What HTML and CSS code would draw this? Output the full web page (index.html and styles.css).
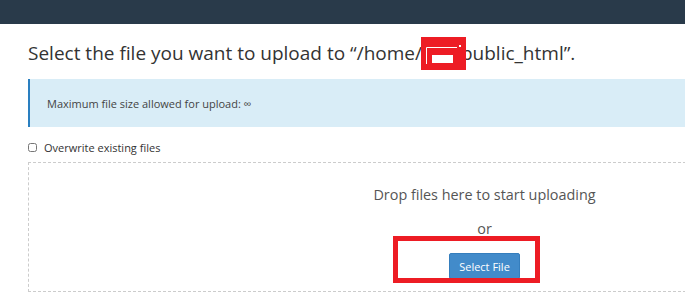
FILE: index.html
```html
<!DOCTYPE html>
<html lang="en">
<head>
    <meta charset="UTF-8">
    <meta name="viewport" content="width=device-width, initial-scale=1.0">
    <title>File Upload</title>
    <link rel="stylesheet" href="styles.css">
</head>
<body>
    <div class="topbar"></div>

    <div class="content">
        <h1 class="page-title">Select the file you want to upload to “/home/<span class="redact"><svg width="45" height="33" viewBox="0 0 45 33"><path d="M5.5 27 V10.5 H36" fill="none" stroke="#fff" stroke-width="1"/><rect x="38" y="8" width="2" height="2" fill="#fff"/><rect x="11" y="18" width="21" height="8" fill="#fff"/></svg></span>public_html”.</h1>

        <div class="callout">
            Maximum file size allowed for upload: ∞
        </div>

        <label class="overwrite">
            <input type="checkbox">
            Overwrite existing files
        </label>

        <div class="dropzone">
            <p class="drop-text">Drop files here to start uploading</p>
            <p class="drop-or">or</p>
            <div class="btn-wrap">
                <button class="btn-select">Select File</button>
                <div class="highlight"></div>
            </div>
        </div>
    </div>
</body>
</html>
```

FILE: styles.css
```css
html, body {
    overflow: hidden;
}
body {
    margin: 0;
    font-family: "Open Sans", "Liberation Sans", sans-serif;
    color: #333;
    background: #fff;
}
.topbar {
    height: 24px;
    background-color: #293a4a;
}
.content {
    width: 913px;
    margin-left: 28px;
}
.page-title {
    font-size: 19px;
    font-weight: normal;
    line-height: 28px;
    margin: 13px 0 0 0;
    white-space: nowrap;
}
.redact {
    position: relative;
    display: inline-block;
    width: 45px;
    height: 33px;
    margin: 0 -5px 0 -1px;
    vertical-align: -10px;
    background: #ed1c24;
}
.redact svg {
    display: block;
}
.callout {
    margin-top: 9px;
    height: 48px;
    box-sizing: border-box;
    padding: 17px 0 0 17px;
    background-color: #d9edf7;
    border-left: 2px solid #2a7fc0;
    font-size: 11px;
    color: #444;
}
.overwrite {
    display: flex;
    align-items: center;
    gap: 7px;
    margin-top: 13px;
    font-size: 11px;
    color: #333;
}
.overwrite input {
    width: 9px;
    height: 9px;
    margin: 0;
}
.dropzone {
    margin-top: 7px;
    height: 130px;
    box-sizing: border-box;
    border: 1px dashed #ccc;
    text-align: center;
    padding-top: 22px;
}
.drop-text {
    margin: 0;
    font-size: 14.4px;
    line-height: 20px;
    color: #555;
}
.drop-or {
    margin: 14px 0 0 0;
    font-size: 14.4px;
    line-height: 20px;
    color: #555;
}
.btn-wrap {
    position: relative;
    display: inline-block;
    margin-top: 14px;
}
.btn-select {
    display: block;
    width: 71px;
    height: 26px;
    padding: 0;
    font-family: inherit;
    font-size: 11px;
    color: #fff;
    background-color: #428bca;
    border: 1px solid #357ebd;
    border-radius: 2px;
}
.highlight {
    position: absolute;
    left: -56px;
    top: -17px;
    width: 147px;
    height: 47px;
    box-sizing: border-box;
    border: 5px solid #ed1c24;
}
```
